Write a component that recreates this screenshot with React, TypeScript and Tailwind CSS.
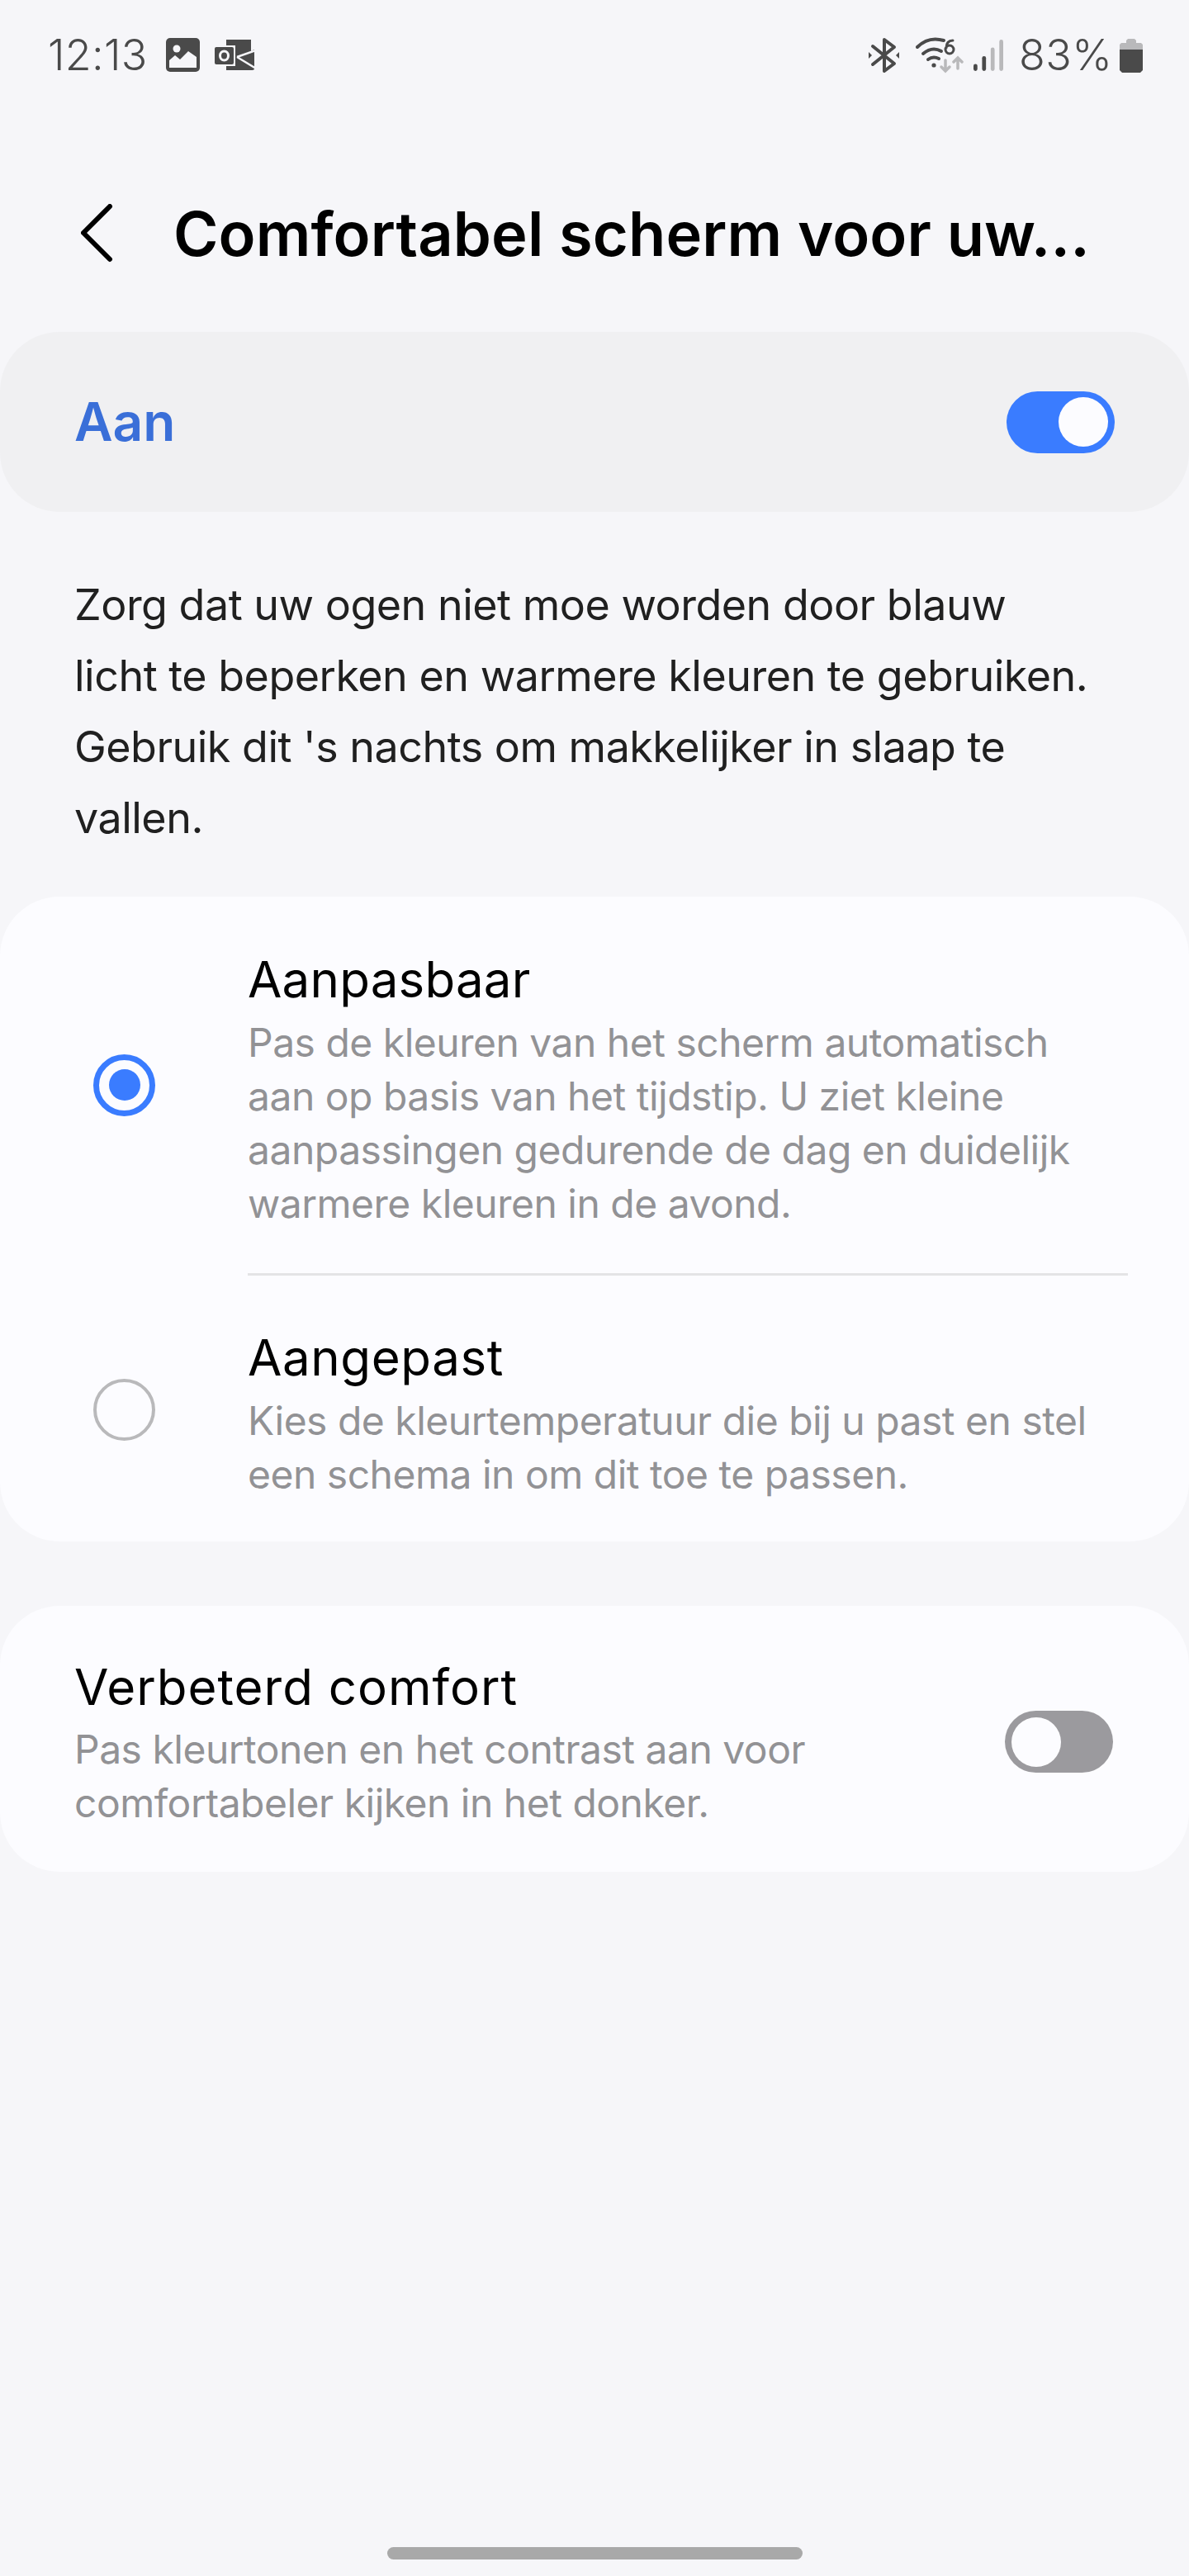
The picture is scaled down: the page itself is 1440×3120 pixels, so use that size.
const font = { fontFamily: "Inter, 'Noto Sans', sans-serif" };

function Toggle({ on, className = "" }: { on: boolean; className?: string }) {
  return (
    <div className={`flex h-[75px] w-[131px] shrink-0 items-center rounded-full px-2 ${on ? "justify-end bg-[#3a7cff]" : "justify-start bg-[#9b9a9e]"} ${className}`}>
      <div className="h-[60px] w-[60px] rounded-full bg-[#fcfcff]" />
    </div>
  );
}

function StatusLeft() {
  return (
    <div className="flex items-center">
      <span className="w-[121px] text-[52px] leading-none font-light tracking-[0.3px] text-[#4a4a4a]">12:13</span>
      <svg width="42" height="42" viewBox="0 0 42 42" className="ml-[22px]">
        <rect x="0" y="0" width="41" height="41" rx="5" fill="#4a4a4a" />
        <circle cx="13" cy="13" r="4.5" fill="#f6f6f9" />
        <path d="M4 36V27l7-6 6 5 10-10 10 7v13z" fill="#f6f6f9" />
      </svg>
      <svg width="50" height="40" viewBox="0 0 50 40" className="ml-[17px]">
        <path d="M14 1H44V15L48 13V37L46 38H14V33H25V8H14z" fill="#4a4a4a" />
        <path d="M27 22L50 14M27 22L50 36" stroke="#f6f6f9" strokeWidth="2.5" fill="none" />
        <rect x="0" y="10" width="23" height="21" rx="2" fill="#4a4a4a" />
        <ellipse cx="11.5" cy="20.5" rx="5" ry="5.5" fill="none" stroke="#f6f6f9" strokeWidth="3" />
      </svg>
    </div>
  );
}

function StatusRight() {
  return (
    <div className="flex items-center">
      <svg width="38" height="44" viewBox="0 0 38 44" fill="none" stroke="#4a4a4a" strokeWidth="4" strokeLinejoin="round" strokeLinecap="round">
        <path d="M5 11l26 21-12 9V3l12 9L5 33" />
        <path d="M0 18v8l4-4z" fill="#4a4a4a" stroke="none" />
        <path d="M37 18v8l-4-4z" fill="#4a4a4a" stroke="none" />
      </svg>
      <svg width="58" height="44" viewBox="0 0 58 44" fill="none" className="ml-[19px]" strokeLinecap="round">
        <path d="M2 12C12 2 24 1 34 4" stroke="#4a4a4a" strokeWidth="4" />
        <path d="M9 20c7-6 15-7 22-3" stroke="#4a4a4a" strokeWidth="4" />
        <path d="M15 27c4-3 9-3 13-1" stroke="#4a4a4a" strokeWidth="4" />
        <circle cx="22" cy="34" r="2.6" fill="#4a4a4a" />
        <path d="M36 15a5 5 0 1 0 10 0a5 5 0 1 0 -10 0M37 13c0-6 3-9 8-9" stroke="#4a4a4a" strokeWidth="3" />
        <path d="M36 28v13M31 36l5 5 5-5" stroke="#b9b9bb" strokeWidth="3.5" />
        <path d="M51 38V25M46 30l5-5 5 5" stroke="#b9b9bb" strokeWidth="3.5" />
      </svg>
      <svg width="36" height="40" viewBox="0 0 38 40" className="ml-[12px]">
        <rect x="0" y="31" width="5" height="9" rx="2.5" fill="#4a4a4a" />
        <rect x="11" y="21" width="5" height="19" rx="2.5" fill="#4a4a4a" />
        <rect x="22" y="10" width="5" height="30" rx="2.5" fill="#b9b9bb" />
        <rect x="33" y="0" width="5" height="40" rx="2.5" fill="#b9b9bb" />
      </svg>
      <span className="ml-[19px] w-[112px] text-[52px] leading-none font-light whitespace-nowrap tracking-[0.5px] text-[#4a4a4a]">83%</span>
      <svg width="28" height="41" viewBox="0 0 28 41" className="ml-[10px]">
        <path d="M8 5V2l2-2h8l2 2v3h6l2 2v6H0V7l2-2z" fill="#b9b9bb" />
        <path d="M0 13h28v25l-3 3H3l-3-3z" fill="#4a4a4a" />
      </svg>
    </div>
  );
}

function Radio({ on }: { on: boolean }) {
  return on ? (
    <div className="flex h-[75px] w-[75px] shrink-0 items-center justify-center rounded-full border-[7px] border-[#3a7cff]">
      <div className="h-[38px] w-[38px] rounded-full bg-[#3a7cff]" />
    </div>
  ) : (
    <div className="h-[75px] w-[75px] shrink-0 rounded-full border-[4px] border-[#b9b9bb]" />
  );
}

function Option({ on, title, desc, className, titleClass }: { on: boolean; title: string; desc: string[]; className: string; titleClass: string }) {
  return (
    <div className={`flex items-center ${className}`}>
      <div className="mb-[4px] flex w-[300px] shrink-0 justify-start pl-[113px]">
        <Radio on={on} />
      </div>
      <div className="flex-1">
        <div className={`text-[60px] leading-[88px] text-black ${titleClass}`}>{title}</div>
        {desc.map((l) => (
          <div key={l} className="text-[48px] leading-[65px] tracking-[-0.5px] text-[#929295] whitespace-nowrap">{l}</div>
        ))}
      </div>
    </div>
  );
}

export default function App() {
  return (
    <div className="flex h-[3120px] w-[1440px] flex-col overflow-hidden bg-[#f6f6f9]" style={font}>
      <div className="flex h-[134px] items-center justify-between pr-[56px] pl-[58px]">
        <StatusLeft />
        <StatusRight />
      </div>
      <div className="mt-[74px] flex h-[150px] items-center">
        <svg width="42" height="72" viewBox="0 0 42 72" fill="none" className="ml-[98px]" stroke="#000" strokeWidth="6" strokeLinecap="round" strokeLinejoin="round">
          <path d="M35 3L3 35l32 32" />
        </svg>
        <div className="ml-[70px] text-[74px] leading-none font-semibold tracking-[0.1px] text-black whitespace-nowrap">Comfortabel scherm voor uw...</div>
      </div>
      <div className="mt-[44px] flex h-[218px] items-center justify-between rounded-[72px] bg-[#f0f0f2] px-[90px]">
        <span className="text-[64px] font-semibold text-[#3a6fd8]">Aan</span>
        <Toggle on />
      </div>
      <div className="mt-[70px] px-[90px] text-[52px] leading-[86px] tracking-[-0.5px] text-[#202020]">
        <div className="whitespace-nowrap">Zorg dat uw ogen niet moe worden door blauw</div>
        <div className="whitespace-nowrap">licht te beperken en warmere kleuren te gebruiken.</div>
        <div className="whitespace-nowrap">Gebruik dit 's nachts om makkelijker in slaap te</div>
        <div className="whitespace-nowrap">vallen.</div>
      </div>
      <div className="mt-[52px] rounded-[72px] bg-[#fcfcff] pt-[56px] pb-[49px]">
        <Option
          on
          title="Aanpasbaar"
          titleClass="tracking-[0.2px]"
          className=""
          desc={[
            "Pas de kleuren van het scherm automatisch",
            "aan op basis van het tijdstip. U ziet kleine",
            "aanpassingen gedurende de dag en duidelijk",
            "warmere kleuren in de avond.",
          ]}
        />
        <div className="mt-[52px] mr-[74px] ml-[300px] h-[3px] bg-[#e4e4e6]" />
        <Option
          on={false}
          title="Aangepast"
          titleClass="tracking-[0.6px]"
          className="mt-[55px]"
          desc={["Kies de kleurtemperatuur die bij u past en stel", "een schema in om dit toe te passen."]}
        />
      </div>
      <div className="mt-[78px] flex items-center justify-between rounded-[72px] bg-[#fcfcff] pt-[55px] pr-[92px] pb-[51px] pl-[90px]">
        <div>
          <div className="text-[60px] leading-[86px] tracking-[1px] text-black">Verbeterd comfort</div>
          <div className="text-[48px] leading-[65px] tracking-[-0.5px] text-[#929295] whitespace-nowrap">Pas kleurtonen en het contrast aan voor</div>
          <div className="text-[48px] leading-[65px] tracking-[-0.5px] text-[#929295] whitespace-nowrap">comfortabeler kijken in het donker.</div>
        </div>
        <Toggle on={false} className="mt-[3px]" />
      </div>
      <div className="mt-auto mb-[20px] flex justify-center">
        <div className="h-[15px] w-[503px] rounded-full bg-[#a9a9a9]" />
      </div>
    </div>
  );
}
